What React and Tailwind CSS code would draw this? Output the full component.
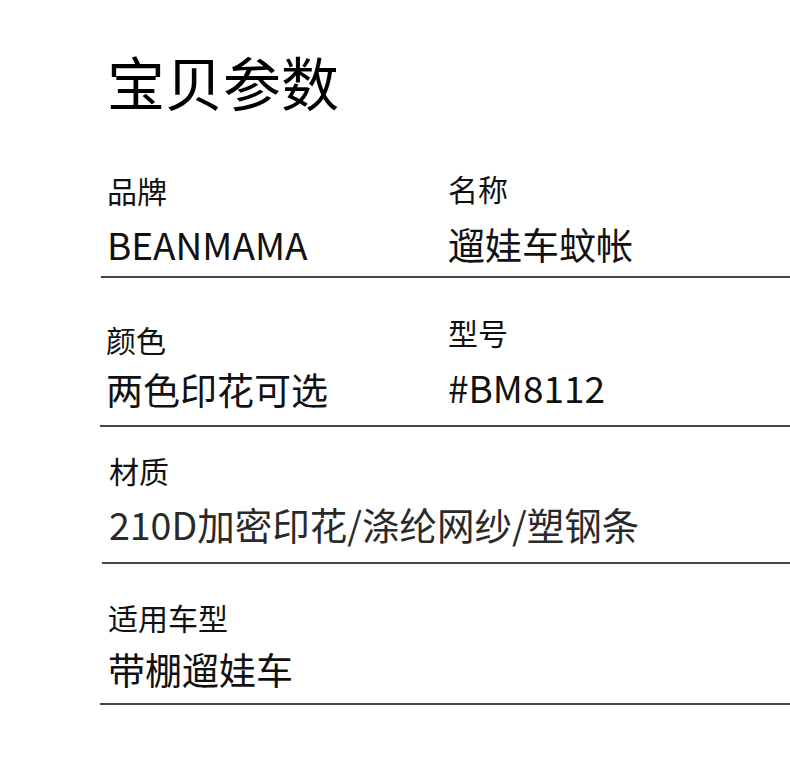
export default function App() {
  return (
    <div className="w-[790px] h-[773px] bg-white overflow-hidden font-['Noto_Sans_CJK_SC',sans-serif] text-[#111]">
      <h1 className="pl-[107px] pt-[52px] text-[58px] leading-none font-normal text-black">宝贝参数</h1>

      <div className="ml-[101px] mt-[65px] border-b-2 border-[#444] pl-[6px] pb-[13px] grid grid-cols-[341px_1fr]">
        <div className="flex flex-col">
          <div className="text-[30px] leading-none">品牌</div>
          <div className="mt-[21px] text-[37px] leading-none">BEANMAMA</div>
        </div>
        <div className="flex flex-col -mt-[2px]">
          <div className="text-[30px] leading-none">名称</div>
          <div className="mt-[23px] text-[37px] leading-none">遛娃车蚊帐</div>
        </div>
      </div>

      <div className="ml-[100px] pt-[46px] border-b-2 border-[#444] pl-[6px] pb-[17px] grid grid-cols-[342px_1fr]">
        <div className="flex flex-col">
          <div className="text-[30px] leading-none">颜色</div>
          <div className="mt-[17px] text-[37px] leading-none">两色印花可选</div>
        </div>
        <div className="flex flex-col -mt-[7px]">
          <div className="text-[30px] leading-none">型号</div>
          <div className="mt-[22px] text-[37px] leading-none">#BM8112</div>
        </div>
      </div>

      <div className="ml-[102px] pt-[28px] border-b-2 border-[#444] pl-[7px] pb-[19px] flex flex-col">
        <div className="text-[30px] leading-none">材质</div>
        <div className="mt-[20px] text-[37.5px] leading-none text-[#2a2a2a]">210D加密印花/涤纶网纱/塑钢条</div>
      </div>

      <div className="ml-[100px] pt-[38px] border-b-2 border-[#444] pl-[8px] pb-[15px] flex flex-col">
        <div className="text-[30px] leading-none">适用车型</div>
        <div className="mt-[19px] text-[37px] leading-none">带棚遛娃车</div>
      </div>
    </div>
  );
}
